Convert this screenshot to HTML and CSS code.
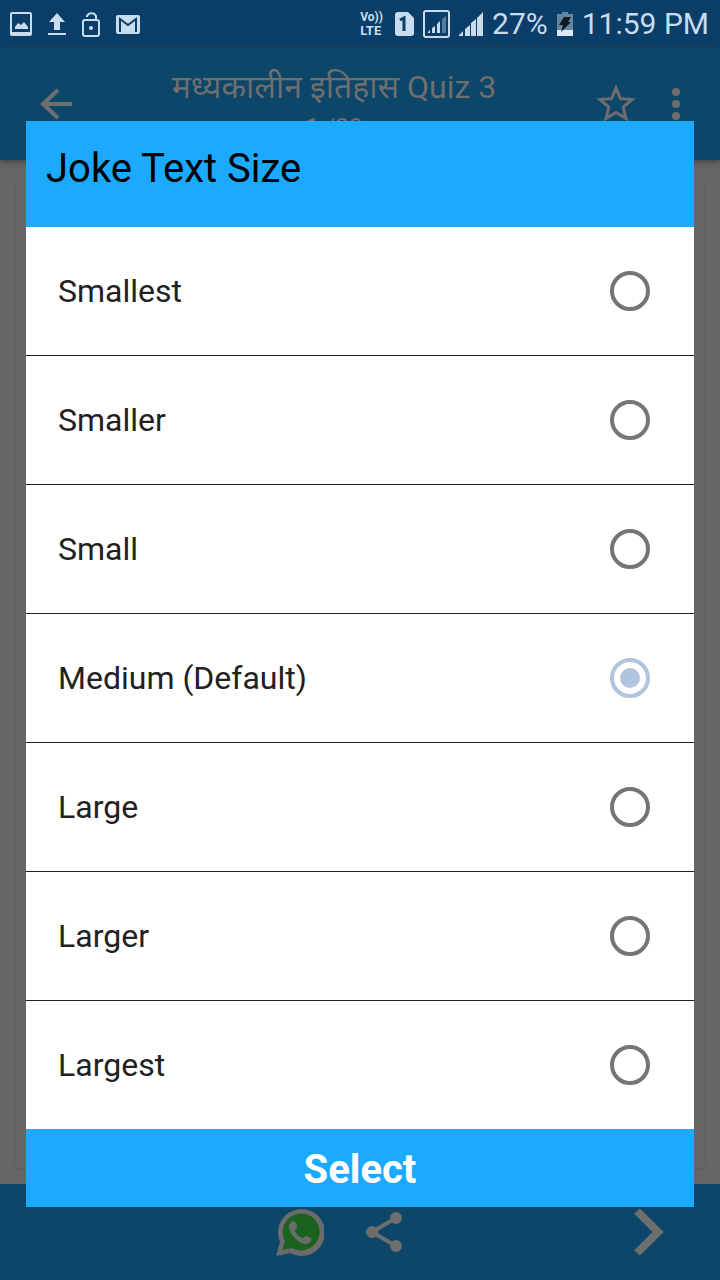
FILE: index.html
```html
<!DOCTYPE html>
<html lang="en">
<head>
  <meta charset="UTF-8">
  <meta name="viewport" content="width=device-width, initial-scale=1">
  <title>Joke Text Size</title>
  <link rel="stylesheet" href="styles.css">
</head>
<body>
  <div class="screen">
    <div class="status-bar">
      <div class="status-group">
        <svg width="22" height="24" viewBox="0 0 22 24">
          <path fill="currentColor" fill-rule="evenodd" d="M2 0h18a2 2 0 0 1 2 2v20a2 2 0 0 1-2 2H2a2 2 0 0 1-2-2V2a2 2 0 0 1 2-2zm0 2v18h18V2z"/>
          <path fill="currentColor" d="M5 17v-2l3-4 3 2 3-3 4 5v2z"/>
        </svg>
        <svg width="18" height="22" viewBox="0 0 18 22">
          <path fill="currentColor" d="M9 0l8 9h-5v8H6V9H1zM0 20h18v2H0z"/>
        </svg>
        <svg width="18" height="26" viewBox="0 0 18 26">
          <path fill="none" stroke="currentColor" stroke-width="2" d="M5 6V5a5 5 0 0 1 9 0v5M3 9h12a2 2 0 0 1 2 2v12a2 2 0 0 1-2 2H3a2 2 0 0 1-2-2V11a2 2 0 0 1 2-2z"/>
          <circle cx="9" cy="17" r="2" fill="currentColor"/>
        </svg>
        <svg width="24" height="19" viewBox="0 0 24 19">
          <rect width="24" height="19" rx="2" fill="currentColor"/>
          <path fill="none" stroke="#0a3d68" stroke-width="2" d="M4 17V4l8 6 8-6v13"/>
        </svg>
      </div>
      <div class="status-group status-right">
        <div class="volte"><span>Vo))</span><span class="lte">LTE</span></div>
        <svg width="19" height="24" viewBox="0 0 19 24">
          <path fill="currentColor" d="M3 0h10l6 6v15a3 3 0 0 1-3 3H3a3 3 0 0 1-3-3V3a3 3 0 0 1 3-3z"/>
          <path fill="none" stroke="#0a3d68" stroke-width="3" d="M5 8l4-2v13"/>
        </svg>
        <svg width="27" height="28" viewBox="0 0 27 28">
          <rect x="1" y="1" width="25" height="26" rx="2" fill="none" stroke="currentColor" stroke-width="2"/>
          <path fill="currentColor" d="M5 23v-1l2-2v3zM9 23v-5l3-2v7zM14 23v-9l3-3v12z"/>
          <path fill="currentColor" opacity=".4" d="M19 23V9l4-3v17z"/>
        </svg>
        <svg width="24" height="24" viewBox="0 0 24 24">
          <path fill="currentColor" d="M0 24v-1l4-4v5zM6 24v-7l5-4v11zM12 24V11l5-4v17zM18 24V6l6-6v24z"/>
        </svg>
        <span class="status-text">27%</span>
        <svg width="16" height="24" viewBox="0 0 16 24">
          <path fill="#66859f" d="M5 0h6v2h5v22H0V2h5z"/>
          <path fill="#dce9f4" d="M0 18h16v6H0z"/>
          <path fill="#101820" d="M7 5h7l-3 5h3L4 20l2-7H2z"/>
        </svg>
        <span class="status-text">11:59 PM</span>
      </div>
    </div>

    <header class="app-bar">
      <button class="icon-button back" type="button" aria-label="Back">
        <svg width="32" height="32" viewBox="0 0 32 32">
          <path fill="none" stroke="currentColor" stroke-width="4" d="M32 16H3M18 2L3 16l15 14"/>
        </svg>
      </button>
      <h1 class="app-title">मध्यकालीन इतिहास Quiz 3<small>1 /20</small></h1>
      <button class="icon-button" type="button" aria-label="Favourite">
        <svg width="40" height="42" viewBox="0 0 40 42">
          <path fill="none" stroke="currentColor" stroke-width="3" d="M20 5l4.400 10.600 11.600 1-8.800 7.500 2.700 11.300L20 29.400l-9.900 6 2.700-11.300L4 16.600l11.600-1z"/>
        </svg>
      </button>
      <button class="icon-button menu" type="button" aria-label="More options">
        <svg width="8" height="32" viewBox="0 0 8 32">
          <g fill="currentColor"><circle cx="4" cy="4" r="4"/><circle cx="4" cy="16" r="4"/><circle cx="4" cy="28" r="4"/></g>
        </svg>
      </button>
    </header>

    <main class="content"><div class="card"></div></main>

    <footer class="bottom-bar">
      <span></span>
      <div class="share-buttons">
        <button class="icon-button" type="button" aria-label="WhatsApp">
          <svg width="48" height="48" viewBox="0 0 48 48">
            <path fill="#6b6b6b" d="M0 48l4-14A23.500 23.500 0 1 1 14 45z"/>
            <path fill="#1b621f" d="M6 42l3-9A18.500 18.500 0 1 1 16 40z"/>
            <path fill="#6b6b6b" d="M15 14c2-2 4-1 5 1l1 4c0 2-2 2-2 4 2 4 4 6 8 7 2 0 2-3 4-2l4 2c1 1 0 4-2 5-3 2-7 1-11-2-5-4-8-8-9-13 0-2 0-4 2-6z"/>
          </svg>
        </button>
        <button class="icon-button" type="button" aria-label="Share">
          <svg width="36" height="40" viewBox="0 0 36 40">
            <path fill="none" stroke="currentColor" stroke-width="4" d="M30 6L6 20l24 14"/>
            <g fill="currentColor"><circle cx="30" cy="6" r="6"/><circle cx="6" cy="20" r="6"/><circle cx="30" cy="34" r="6"/></g>
          </svg>
        </button>
      </div>
      <button class="icon-button next" type="button" aria-label="Next">
        <svg width="30" height="48" viewBox="0 0 30 48">
          <path fill="none" stroke="currentColor" stroke-width="8" d="M3 3l21 21L3 45"/>
        </svg>
      </button>
    </footer>

    <div class="overlay">
      <form class="dialog" role="dialog" aria-labelledby="dialog-title">
        <h2 class="dialog-title" id="dialog-title">Joke Text Size</h2>
        <div class="options">
          <label class="option">Smallest<input type="radio" name="size" value="smallest"></label>
          <label class="option">Smaller<input type="radio" name="size" value="smaller"></label>
          <label class="option">Small<input type="radio" name="size" value="small"></label>
          <label class="option">Medium (Default)<input type="radio" name="size" value="medium" checked></label>
          <label class="option">Large<input type="radio" name="size" value="large"></label>
          <label class="option">Larger<input type="radio" name="size" value="larger"></label>
          <label class="option">Largest<input type="radio" name="size" value="largest"></label>
        </div>
        <button class="select-button" type="button">Select</button>
      </form>
    </div>
  </div>
</body>
</html>
```
FILE: styles.css
```css
* {
  box-sizing: border-box;
}
body {
  margin: 0;
  font-family: Roboto, "Noto Sans", sans-serif;
  background: #666;
}
svg {
  display: block;
  flex: none;
}
.screen {
  position: relative;
  display: flex;
  flex-direction: column;
  min-height: 100vh;
}

/* status bar */
.status-bar {
  display: flex;
  align-items: center;
  justify-content: space-between;
  height: 48px;
  padding: 0 11px 0 10px;
  background: #0a3d68;
  color: #c8dcee;
}
.status-group {
  display: flex;
  align-items: center;
  gap: 16px;
}
.status-right {
  gap: 9px;
}
.volte {
  display: flex;
  flex-direction: column;
  margin-right: 3px;
  font-size: 12px;
  font-weight: bold;
  line-height: 13px;
}
.lte {
  font-size: 13px;
}
.status-text {
  font-size: 30px;
  line-height: 36px;
  white-space: nowrap;
}

/* toolbar */
.app-bar {
  display: flex;
  align-items: center;
  height: 112px;
  padding: 0 40px;
  background: #0c4669;
  color: #6e6e6e;
  box-shadow: 0 2px 6px #444;
}
.app-title {
  flex: 1;
  margin: 0;
  padding-top: 6px;
  font-size: 32px;
  font-weight: normal;
  line-height: 40px;
  text-align: center;
}
.app-title small {
  display: block;
  font-size: 24px;
}
.icon-button {
  padding: 0;
  border: 0;
  background: none;
  color: #6e6e6e;
}
.menu {
  margin-left: 36px;
}

.content {
  flex: 1;
  display: flex;
  padding: 16px;
}
.card {
  flex: 1;
  border-radius: 4px;
  background: #666;
  box-shadow: 0 1px 2px #5a5a5a;
}

/* bottom bar */
.bottom-bar {
  display: grid;
  grid-template-columns: 1fr auto 1fr;
  align-items: center;
  height: 96px;
  padding: 0 56px;
  background: #0c4669;
}
.share-buttons {
  display: flex;
  align-items: center;
  gap: 42px;
  margin-right: 42px;
}
.next {
  justify-self: end;
}

/* text size dialog */
.overlay {
  position: absolute;
  inset: 48px 0 0;
  display: flex;
  align-items: center;
  padding: 0 26px;
}
.dialog {
  flex: 1;
  background: #fff;
}
.dialog-title {
  margin: 0;
  padding: 24px 20px 34px;
  background: #1baaff;
  color: #000;
  font-size: 40px;
  font-weight: normal;
  line-height: 48px;
}
.option {
  display: flex;
  align-items: center;
  justify-content: space-between;
  padding: 44px 44px 44px 32px;
  color: #212121;
  font-size: 32px;
  line-height: 40px;
}
.option + .option {
  border-top: 1px solid #212121;
}
.option input {
  appearance: none;
  width: 40px;
  height: 40px;
  margin: 0;
  border: 4px solid #757575;
  border-radius: 50%;
}
.option input:checked {
  border-color: #b0c4de;
  background: #b0c4de;
  background-clip: content-box;
  padding: 6px;
}
.select-button {
  display: block;
  width: 100%;
  padding: 17px 0 13px;
  border: 0;
  background: #1baaff;
  color: #fff;
  font-family: inherit;
  font-size: 40px;
  font-weight: bold;
  line-height: 48px;
}
```
